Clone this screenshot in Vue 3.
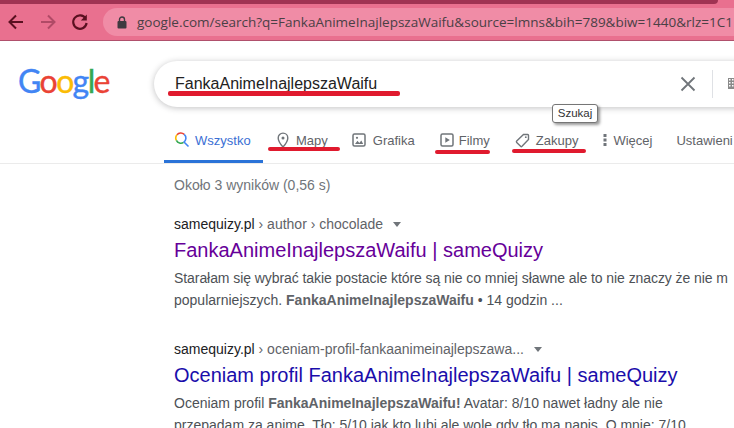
<script setup>
const tabs = [
  { id: 'all', label: 'Wszystko', active: true },
  { id: 'map', label: 'Mapy' },
  { id: 'img', label: 'Grafika' },
  { id: 'vid', label: 'Filmy' },
  { id: 'tag', label: 'Zakupy' },
  { id: 'more', label: 'Więcej' },
]
</script>

<template>
  <div class="page">
    <div class="tabstrip"><div class="tabedge"></div></div>
    <header class="toolbar">
      <svg class="nav nav-back" width="18" height="18" viewBox="0 0 18 18"><path d="M16 9H3M9 2.500 2.500 9 9 15.500" fill="none" stroke="#5a1020" stroke-width="2"/></svg>
      <svg class="nav nav-fwd" width="18" height="18" viewBox="0 0 18 18"><path d="M2 9h13M9 2.500 15.500 9 9 15.500" fill="none" stroke="#b04a66" stroke-width="2"/></svg>
      <svg class="nav nav-re" width="18" height="18" viewBox="0 0 18 18"><path d="M14.600 5.400A6.700 6.700 0 1 0 15.600 10" fill="none" stroke="#5a1020" stroke-width="2.200"/><path d="M15.800 1.600v6h-6z" fill="#5a1020"/></svg>
      <div class="omnibox">
        <svg width="10" height="13" viewBox="0 0 10 13"><path d="M2.500 5.500V3.500a2.500 2.500 0 0 1 5 0v2" fill="none" stroke="#3f3a40" stroke-width="1.400"/><rect x=".5" y="5" width="9" height="7.500" rx="1" fill="#3f3a40"/></svg>
        <span class="url">google.com/search?q=FankaAnimeInajlepszaWaifu&amp;source=lmns&amp;bih=789&amp;biw=1440&amp;rlz=1C1</span>
      </div>
    </header>

    <section class="masthead">
      <div class="logo"><span class="b">G</span><span class="r">o</span><span class="y">o</span><span class="b">g</span><span class="g">l</span><span class="r">e</span></div>
      <div class="searchbox">
        <span class="query">FankaAnimeInajlepszaWaifu</span>
        <svg class="clear" width="16" height="16" viewBox="0 0 16 16"><path d="M1.500 1.500l13 13M14.500 1.500l-13 13" stroke="#70757a" stroke-width="1.800"/></svg>
        <span class="divider"></span>
        <svg class="kbd" width="8" height="11" viewBox="0 0 8 11"><rect width="8" height="11" fill="#8a8a8a"/><g fill="#fff"><rect x="1" y="1" width="1.500" height="1.500"/><rect x="4" y="1" width="1.500" height="1.500"/><rect x="1" y="4" width="1.500" height="1.500"/><rect x="4" y="4" width="1.500" height="1.500"/><rect x="1" y="7" width="1.500" height="1.500"/><rect x="4" y="7" width="1.500" height="1.500"/></g></svg>
      </div>
    </section>

    <nav class="tabs">
      <a v-for="t in tabs" :key="t.id" class="tab" :class="[t.id, { active: t.active }]">
        <svg v-if="t.id === 'all'" width="16" height="16" viewBox="0 0 16 16"><path d="M10.200 2.400A5 5 0 0 0 3 2.800" fill="none" stroke="#ea4335" stroke-width="1.600"/><path d="M3 2.800a5 5 0 0 0-.6 5.600" fill="none" stroke="#fbbc05" stroke-width="1.600"/><path d="M2.400 8.400a5 5 0 0 0 7.200 2" fill="none" stroke="#34a853" stroke-width="1.600"/><path d="M9.600 10.400a5 5 0 0 0 .6-8M10 10l4.500 4.500" fill="none" stroke="#4285f4" stroke-width="1.600"/></svg>
        <svg v-else-if="t.id === 'map'" width="12" height="16" viewBox="0 0 12 16"><path d="M6 15S1.200 9.600 1.200 5.900a4.800 4.800 0 0 1 9.600 0C10.800 9.600 6 15 6 15z" fill="none" stroke="#70757a" stroke-width="1.400"/><circle cx="6" cy="5.900" r="1.500" fill="#70757a"/></svg>
        <svg v-else-if="t.id === 'img'" width="14" height="14" viewBox="0 0 14 14"><rect x="1" y="1" width="12" height="12" rx="1.500" fill="none" stroke="#70757a" stroke-width="1.500"/><path d="M3 11l2.500-3.200 1.800 2.200 2-2.600 1.900 3.600z" fill="#70757a"/><circle cx="5" cy="4.800" r="1.100" fill="#70757a"/></svg>
        <svg v-else-if="t.id === 'vid'" width="14" height="14" viewBox="0 0 14 14"><rect x="1" y="1" width="12" height="12" rx="1.500" fill="none" stroke="#70757a" stroke-width="1.500"/><path d="M5.300 4.200 9.800 7l-4.500 2.800z" fill="#70757a"/></svg>
        <svg v-else-if="t.id === 'tag'" width="15" height="15" viewBox="0 0 15 15"><path d="M8.500 1.500h4.200a.8.8 0 0 1 .8.8v4.200L7 13.300a1 1 0 0 1-1.400 0L1.700 9.400a1 1 0 0 1 0-1.400z" fill="none" stroke="#70757a" stroke-width="1.400"/><circle cx="10.800" cy="4.200" r=".9" fill="#70757a"/></svg>
        <svg v-else width="4" height="12" viewBox="0 0 4 12"><g fill="#70757a"><rect x=".5" width="3" height="3"/><rect x=".5" y="4.500" width="3" height="3"/><rect x=".5" y="9" width="3" height="3"/></g></svg>
        <span>{{ t.label }}</span>
      </a>
      <a class="tab settings">Ustawieni</a>
    </nav>

    <main class="results">
      <p class="stats">Około 3 wyników (0,56 s)</p>
      <article class="result first">
        <div class="crumb"><span class="site">samequizy.pl</span> › author › chocolade <i class="caret"></i></div>
        <h3 class="title visited">FankaAnimeInajlepszaWaifu | sameQuizy</h3>
        <p class="snippet"><span class="tight">Starałam się wybrać takie postacie które są nie co mniej sławne ale to nie znaczy że nie m</span><br>popularniejszych. <b>FankaAnimeInajlepszaWaifu</b> • 14 godzin ...</p>
      </article>
      <article class="result second">
        <div class="crumb"><span class="site">samequizy.pl</span> › oceniam-profil-fankaanimeinajlepszawa... <i class="caret"></i></div>
        <h3 class="title">Oceniam profil FankaAnimeInajlepszaWaifu | sameQuizy</h3>
        <p class="snippet">Oceniam profil <b>FankaAnimeInajlepszaWaifu!</b> Avatar: 8/10 nawet ładny ale nie<br>przepadam za anime. Tło: 5/10 jak kto lubi ale wole gdy tło ma napis. O mnie: 7/10</p>
      </article>
    </main>

    <div class="tooltip">Szukaj</div>
    <span class="mark m-query"></span>
    <span class="mark m-map"></span>
    <span class="mark m-vid"></span>
    <span class="mark m-tag"></span>
  </div>
</template>

<style>
html, body { margin: 0; overflow: hidden; background: #fff; }
</style>

<style scoped>
.page {
  position: relative;
  width: 734px;
  height: 428px;
  overflow: hidden;
  background: #fff;
  font-family: "Liberation Sans", Arial, sans-serif;
  color: #4d5156;
}
.tabstrip { height: 4px; background: #e9708f; }
.tabedge { width: 718px; height: 4px; background: #a03353; border-bottom-right-radius: 4px; }
.toolbar {
  display: flex;
  align-items: center;
  height: 36px;
  background: #e9708f;
  border-bottom: 1px solid #b0506c;
  box-sizing: content-box;
}
.nav { flex: none; }
.nav-back { margin-left: 7px; }
.nav-fwd { margin-left: 14px; }
.nav-re { margin-left: 14px; }
.omnibox {
  flex: none;
  display: flex;
  align-items: center;
  gap: 10px;
  width: 700px;
  height: 28px;
  margin-left: 14px;
  padding-left: 14px;
  border-radius: 14px;
  background: #f08ca6;
  color: #3f3a40;
}
.url { font: 13.500px "Open Sans", sans-serif; white-space: nowrap; color: #4a4045; }
.masthead { display: flex; align-items: flex-start; height: 87px; }
.logo {
  flex: none;
  width: 136px;
  padding: 20px 0 0 18px;
  font: 400 32px/40px Lato, sans-serif;
  letter-spacing: -1.600px;
  -webkit-text-stroke: .4px currentColor;
  box-sizing: border-box;
}
.logo .b { color: #4285f4; }
.logo .r { color: #ea4335; }
.logo .y { color: #fbbc05; }
.logo .g { color: #34a853; }
.searchbox {
  display: flex;
  align-items: center;
  flex: none;
  width: 640px;
  height: 46px;
  margin: 20px 0 0 18px;
  padding-left: 21px;
  padding-bottom: 1px;
  border-radius: 23px;
  box-sizing: border-box;
  background: #fff;
  box-shadow: 0 1px 6px rgba(32, 33, 36, .28);
}
.query { font-size: 16px; color: #222; flex: none; width: 505px; }
.clear { flex: none; }
.divider { width: 1px; height: 28px; background: #dfe1e5; margin-left: 16px; flex: none; }
.kbd { margin-left: 15px; flex: none; }
.tabs {
  display: flex;
  height: 35px;
  border-bottom: 1px solid #ebebeb;
  padding-left: 164px;
  box-sizing: content-box;
}
.tab {
  display: flex;
  flex: none;
  align-items: center;
  gap: 6px;
  height: 35px;
  padding-bottom: 11px;
  font-size: 13px;
  color: #5f6368;
  white-space: nowrap;
  box-sizing: border-box;
}
.tab.all { width: 99px; padding-left: 10px; padding-bottom: 8px; color: #3b6fd4; border-bottom: 3px solid #2a73d8; gap: 5px; }
.tab.map { margin-left: 14px; gap: 7px; }
.tab.img { margin-left: 24px; gap: 7px; }
.tab.vid { margin-left: 25px; gap: 5px; }
.tab.tag { margin-left: 25px; }
.tab.more { margin-left: 25px; gap: 6px; }
.tab.settings { margin-left: 24px; }
.results { padding: 13px 0 0 174px; width: 700px; }
.stats { margin: 0; font-size: 14px; line-height: 16px; color: #70757a; }
.result { white-space: nowrap; }
.first { margin-top: 23px; }
.second { margin-top: 30px; }
.crumb { font-size: 14px; line-height: 16px; color: #5f6368; }
.site { color: #202124; }
.caret {
  display: inline-block;
  margin: 0 0 2px 6px;
  border: 4.500px solid transparent;
  border-top: 5px solid #70757a;
  border-bottom: 0;
  vertical-align: middle;
}
.title { margin: 5px 0 0; font: 400 20px/26px "Liberation Sans", Arial, sans-serif; color: #1a0dab; }
.title.visited { color: #609; }
.snippet { margin: 4px 0 0; font-size: 14px; line-height: 22px; color: #4d5156; }
.tight { letter-spacing: -.07px; }
.snippet b { font-weight: 700; color: #5f6368; }
.tooltip {
  position: absolute;
  left: 552px;
  top: 104px;
  width: 46px;
  height: 19px;
  box-sizing: border-box;
  font-size: 11.500px;
  line-height: 17px;
  text-align: center;
  color: #333;
  background: #fff;
  border: 1px solid #767676;
  border-radius: 3px;
  box-shadow: 2px 2px 3px rgba(0, 0, 0, .4);
}
.mark { position: absolute; height: 4px; background: #e01a2e; border-radius: 2px; }
.m-query { left: 168px; top: 91px; width: 232px; height: 5px; }
.m-map { left: 268px; top: 147px; width: 72px; }
.m-vid { left: 435px; top: 150px; width: 55px; }
.m-tag { left: 512px; top: 149px; width: 74px; }
</style>
